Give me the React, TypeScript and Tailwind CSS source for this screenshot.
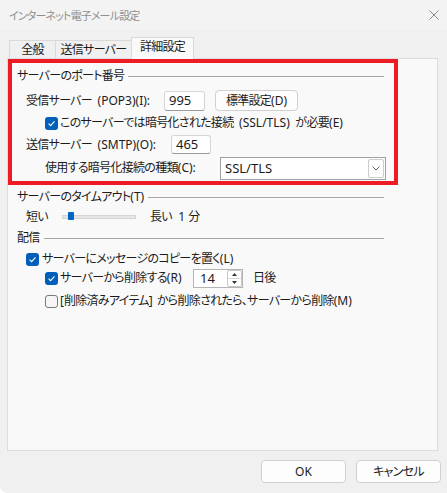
import React from "react";

const T = ({ s }: { s: string }) => (
  <>
    {s.split(/([\u3000-\u30ff\u4e00-\u9fff\uff00-\uffef]+)/).map((p, i) =>
      i % 2 ? (
        <span key={i} className="tracking-[-0.7px]">
          {p}
        </span>
      ) : (
        p
      )
    )}
  </>
);

const Check = ({ checked }: { checked: boolean }) =>
  checked ? (
    <span className="w-[13px] h-[13px] rounded-[3px] bg-[#005fb8] flex items-center justify-center shrink-0">
      <svg width="9" height="9" viewBox="0 0 9 9">
        <path d="M1.6 4.7 L3.6 6.6 L7.5 2.4" fill="none" stroke="white" strokeWidth="1.1" />
      </svg>
    </span>
  ) : (
    <span className="w-[13px] h-[13px] rounded-[3px] border border-[#7a7a7a] bg-[#f6f6f6] shrink-0" />
  );

const GroupHeader = ({ text, cls }: { text: string; cls: string }) => (
  <div className={"flex items-center " + cls}>
    <span className="whitespace-nowrap">
      <T s={text} />
    </span>
    <div className="flex-1 h-px bg-[#a6a6a6] ml-[4px]" />
  </div>
);

export default function App() {
  return (
    <div className="w-[447px] h-[493px] bg-[#f0f0f0] flex flex-col text-[12px] leading-none text-[#1b1b1b] font-['Noto_Sans','Noto_Sans_CJK_JP',sans-serif] [font-feature-settings:'palt'_1] [word-spacing:2.5px] overflow-hidden rounded-bl-[8px]">
      {/* title bar */}
      <div className="h-[30px] flex items-center justify-between pl-[9px] pr-[8px] bg-[#f3f3f3]">
        <span className="text-[#8f8f8f] text-[11px] tracking-[-0.85px]">
          インターネット電子メール設定
        </span>
        <svg width="10" height="10" viewBox="0 0 10 10">
          <path d="M0.5 0.5 L9.5 9.5 M9.5 0.5 L0.5 9.5" stroke="#8a8a8a" strokeWidth="1" />
        </svg>
      </div>

      {/* tabs */}
      <div className="flex items-end h-[29px] pl-[9px] -mb-px relative z-10">
        <div className="w-[47px] h-[18px] mb-px border-l border-t border-r border-[#d9d9d9] flex items-center justify-center">
          <T s="全般" />
        </div>
        <div className="w-[75px] h-[18px] mb-px border-t border-[#d9d9d9] flex items-center justify-center">
          <T s="送信サーバー" />
        </div>
        <div className="w-[63px] h-[22px] border-l border-t border-r border-[#d9d9d9] bg-[#f9f9f9] flex items-center justify-center pb-[3px]">
          <T s="詳細設定" />
        </div>
      </div>

      {/* panel */}
      <div className="ml-[7px] w-[431px] h-[393px] border border-[#dcdcdc] bg-[#f9f9f9] flex flex-col">
        {/* red annotated box */}
        <div className="w-[390px] h-[126px] border-4 border-[#ed1c24] flex flex-col">
          <GroupHeader text="サーバーのポート番号" cls="h-[26px] pl-[5px] pr-[10px]" />
          <div className="h-[23px] flex items-center pl-[14px]">
            <span className="w-[138px] whitespace-nowrap">
              <T s="受信サーバー (POP3)(I):" />
            </span>
            <div className="w-[41px] h-[20px] bg-white border border-[#d6d6d6] border-b-[#9a9a9a] rounded-[3px] flex items-center pl-[4px] text-[13px]">
              995
            </div>
            <div className="ml-[10px] w-[83px] h-[21px] bg-[#fdfdfd] border border-[#d0d0d0] rounded-[4px] flex items-center justify-center">
              <T s="標準設定(D)" />
            </div>
          </div>
          <div className="h-[22px] flex items-center pl-[33px]">
            <Check checked />
            <span className="ml-[2px] whitespace-nowrap">
              <T s="このサーバーでは暗号化された接続 (SSL/TLS) が必要(E)" />
            </span>
          </div>
          <div className="h-[21px] flex items-center pl-[14px]">
            <span className="w-[145px] whitespace-nowrap">
              <T s="送信サーバー (SMTP)(O):" />
            </span>
            <div className="w-[40px] h-[19px] bg-white border border-[#d6d6d6] border-b-[#9a9a9a] rounded-[3px] flex items-center pl-[4px] text-[13px]">
              465
            </div>
          </div>
          <div className="h-[26px] flex items-center pl-[33px]">
            <span className="w-[175px] whitespace-nowrap">
              <T s="使用する暗号化接続の種類(C):" />
            </span>
            <div className="w-[166px] h-[23px] bg-white border border-[#a0a0a0] flex items-center justify-between pl-[4px] pr-[1px] text-[13px]">
              <span>SSL/TLS</span>
              <div className="w-[16px] h-[19px] border border-[#cdcdcd] rounded-[2px] flex items-center justify-center">
                <svg width="8" height="5" viewBox="0 0 8 5">
                  <path d="M0.5 0.5 L4 4 L7.5 0.5" fill="none" stroke="#6a6a6a" strokeWidth="1" />
                </svg>
              </div>
            </div>
          </div>
        </div>

        <GroupHeader text="サーバーのタイムアウト(T)" cls="h-[24px] pl-[9px] pr-[53px]" />
        <div className="h-[16px] flex items-center pl-[18px]">
          <span className="w-[36px]">
            <T s="短い" />
          </span>
          <div className="relative w-[74px] h-[4px] bg-[#e6e6e6] border border-[#d4d4d4]">
            <div className="absolute left-[5px] top-[-4px] w-[6px] h-[8px] bg-[#0067c0] rounded-[1px]" />
          </div>
          <span className="ml-[14px] whitespace-pre [word-spacing:0px]">
            <T s="長い" />
            {"  1 "}
            <T s="分" />
          </span>
        </div>

        <GroupHeader text="配信" cls="h-[26px] pl-[9px] pr-[53px]" />
        <div className="h-[16px] flex items-center pl-[18px]">
          <Check checked />
          <span className="ml-[3px] whitespace-nowrap">
            <T s="サーバーにメッセージのコピーを置く(L)" />
          </span>
        </div>
        <div className="h-[22px] flex items-center pl-[37px]">
          <Check checked />
          <span className="ml-[2px] w-[133px] whitespace-nowrap">
            <T s="サーバーから削除する(R)" />
          </span>
          <div className="w-[50px] h-[19px] bg-white border border-[#b4b4b4] flex items-center">
            <span className="w-[33px] pl-[6px] text-[13px]">14</span>
            <div className="w-[15px] h-[17px] border border-[#c8c8c8] rounded-[2px] flex flex-col">
              <div className="flex-1 flex items-center justify-center border-b border-[#d8d8d8]">
                <svg width="5" height="3" viewBox="0 0 5 3">
                  <path d="M0 3 L2.5 0 L5 3 Z" fill="#333" />
                </svg>
              </div>
              <div className="flex-1 flex items-center justify-center">
                <svg width="5" height="3" viewBox="0 0 5 3">
                  <path d="M0 0 L2.5 3 L5 0 Z" fill="#333" />
                </svg>
              </div>
            </div>
          </div>
          <span className="ml-[10px]">
            <T s="日後" />
          </span>
        </div>
        <div className="h-[24px] flex items-center pl-[37px]">
          <Check checked={false} />
          <span className="ml-[2px] whitespace-nowrap [word-spacing:1px]">
            <T s="[削除済みアイテム] から削除されたら、サーバーから削除(M)" />
          </span>
        </div>
      </div>

      {/* buttons */}
      <div className="flex justify-end gap-[10px] pr-[6px] mt-[9px]">
        <div className="w-[85px] h-[23px] bg-[#fdfdfd] border border-[#d0d0d0] rounded-[4px] flex items-center justify-center">
          OK
        </div>
        <div className="w-[85px] h-[23px] bg-[#fdfdfd] border border-[#d0d0d0] rounded-[4px] flex items-center justify-center">
          <T s="キャンセル" />
        </div>
      </div>
    </div>
  );
}
